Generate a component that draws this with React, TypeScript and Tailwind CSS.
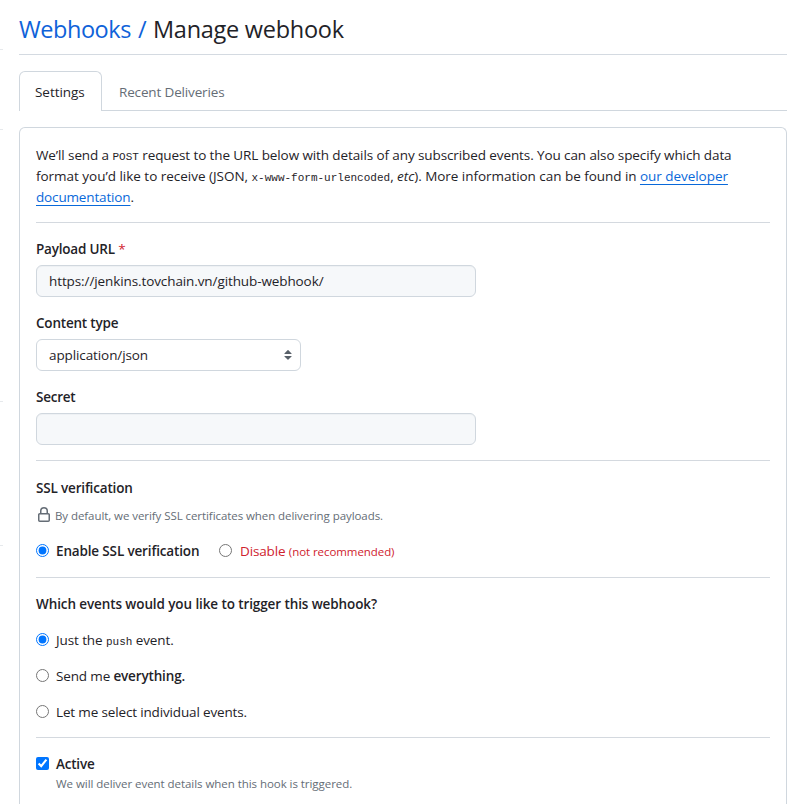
import type { ReactNode } from "react";

function Divider({ className = "" }: { className?: string }) {
  return <div className={`h-px shrink-0 bg-[#d4d9df] ${className}`} />;
}

function Code({ children }: { children: ReactNode }) {
  return <code className="font-['Liberation_Mono',monospace] text-[11px] leading-none tracking-normal">{children}</code>;
}

function Radio({ name, checked }: { name: string; checked?: boolean }) {
  return <input type="radio" name={name} defaultChecked={checked} className="m-0 block size-[13px] shrink-0" />;
}

function LockIcon() {
  return (
    <svg width="16" height="16" viewBox="0 0 16 16" fill="#656d76" className="mt-[2px] shrink-0">
      <path d="M4 4a4 4 0 0 1 8 0v2h.25c.966 0 1.75.784 1.75 1.75v5.5A1.75 1.75 0 0 1 12.25 15h-8.5A1.75 1.75 0 0 1 2 13.25v-5.5C2 6.784 2.784 6 3.75 6H4Zm8.25 3.5h-8.5a.25.25 0 0 0-.25.25v5.5c0 .138.112.25.25.25h8.5a.25.25 0 0 0 .25-.25v-5.5a.25.25 0 0 0-.25-.25ZM10.5 6V4a2.5 2.5 0 1 0-5 0v2Z" />
    </svg>
  );
}

export default function App() {
  return (
    <div className="flex h-[804px] w-[799px] overflow-hidden bg-white font-['Open_Sans',sans-serif] text-[13.5px] leading-[21px] whitespace-nowrap text-[#1f2328]">
      <div className="flex w-[3px] shrink-0 flex-col">
        <div className="mt-[49px] h-px bg-[#e6e9ec]" />
        <div className="mt-[79px] h-px bg-[#e6e9ec]" />
        <div className="mt-[271px] h-px bg-[#e6e9ec]" />
        <div className="mt-[143px] h-px bg-[#e6e9ec]" />
      </div>
      <main className="ml-4 flex w-[768px] shrink-0 flex-col">
        <h1 className="flex h-[55px] shrink-0 border-b border-[#d4dae1] pt-[11px] text-[23.5px] leading-[36px]">
          <a className="w-[134px] tracking-[-0.45px] text-[#0f62d9]">Webhooks<span className="ml-[7px]">/</span></a>
          <span className="tracking-[-0.27px]">Manage webhook</span>
        </h1>

        <nav className="mt-4 flex h-10 shrink-0">
          <div className="flex w-[83px] rounded-t-md border border-b-0 border-[#d0d7de] px-[15px] pt-[10px]">
            <span className="tracking-[-0.05px]">Settings</span>
          </div>
          <div className="flex flex-1 border-b border-[#d0d7de] pt-[11px] pl-[17px] text-[#656d76]">
            <span className="tracking-[-0.15px]">Recent Deliveries</span>
          </div>
        </nav>

        <section className="mt-4 flex flex-1 flex-col rounded-t-md border border-b-0 border-[#d0d7de] px-4 pt-[17px]">
          <p className="flex h-[63px] shrink-0 flex-col">
            <span className="h-[21px] tracking-[-0.1px]">
              We’ll send a <Code>POST</Code> request to the URL below with details of any subscribed events. You can also specify which data
            </span>
            <span className="h-[21px] tracking-[-0.04px]">
              <span className="tracking-[-0.02px]">format you’d like to receive (JSON, </span><Code>x-www-form-urlencoded</Code>, <em>etc</em>). More information can be found in{" "}
              <a className="text-[#0969da] underline decoration-1 underline-offset-[3px]">our developer</a>
            </span>
            <span className="h-[21px] tracking-[-0.15px]">
              <a className="text-[#0969da] underline decoration-1 underline-offset-[3px]">documentation</a>.
            </span>
          </p>
          <Divider className="mt-[14px]" />

          <label className="mt-4 h-[21px] shrink-0 font-semibold tracking-[-0.2px]">
            Payload URL <span className="font-normal text-[#d1242f]">*</span>
          </label>
          <div className="mt-[5px] flex h-8 w-[440px] shrink-0 items-center rounded-md border border-[#d0d7de] bg-[#f6f8fa] px-3 inset-shadow-[0_1px_0_rgba(208,215,222,0.2)]">
            <span className="tracking-[-0.1px]">https://jenkins.tovchain.vn/github-webhook/</span>
          </div>

          <label className="mt-4 h-[21px] shrink-0 font-semibold tracking-[-0.2px]">Content type</label>
          <div className="mt-[5px] flex h-8 w-[265px] shrink-0 items-center justify-between rounded-md border border-[#d0d7de] pr-1 pl-3">
            <span className="tracking-[-0.1px]">application/json</span>
            <svg width="16" height="16" viewBox="0 0 16 16" fill="#586069">
              <path d="M4.427 9.427l3.396 3.396a.251.251 0 0 0 .354 0l3.396-3.396A.25.25 0 0 0 11.396 9H4.604a.25.25 0 0 0-.177.427zM4.423 6.47L7.82 3.072a.25.25 0 0 1 .354 0L11.57 6.47a.25.25 0 0 1-.177.427H4.6a.25.25 0 0 1-.177-.427z" />
            </svg>
          </div>

          <label className="mt-4 h-[21px] shrink-0 font-semibold tracking-[-0.25px]">Secret</label>
          <div className="mt-[5px] h-8 w-[440px] shrink-0 rounded-md border border-[#d0d7de] bg-[#f6f8fa] inset-shadow-[0_1px_0_rgba(208,215,222,0.2)]" />
          <Divider className="mt-[15px]" />

          <h2 className="mt-[17px] h-[21px] shrink-0 font-semibold tracking-[-0.17px]">SSL verification</h2>
          <div className="mt-[6px] flex h-[21px] shrink-0 text-[11.5px] text-[#656d76]">
            <LockIcon />
            <span className="ml-[3px] tracking-[-0.07px]">By default, we verify SSL certificates when delivering payloads.</span>
          </div>
          <div className="mt-[15px] flex h-[21px] shrink-0">
            <div className="flex w-[183px] gap-[7px]">
              <div className="pt-[3px]"><Radio name="ssl" checked /></div>
              <span className="font-semibold tracking-[-0.15px]">Enable SSL verification</span>
            </div>
            <div className="pt-[3px]"><Radio name="ssl" /></div>
            <div className="ml-2 text-[#cf222e]">
              <span className="tracking-[-0.15px]">Disable</span>{" "}
              <span className="text-[11.5px] tracking-[-0.07px]">(not recommended)</span>
            </div>
          </div>
          <Divider className="mt-[15px]" />

          <h2 className="mt-4 h-[21px] shrink-0 font-semibold tracking-[-0.1px]">Which events would you like to trigger this webhook?</h2>
          <div className="mt-[15px] flex h-[21px] shrink-0 gap-[7px]">
            <div className="pt-[3px]"><Radio name="events" checked /></div>
            <span className="tracking-[-0.1px]">Just the <Code>push</Code> event.</span>
          </div>
          <div className="mt-[15px] flex h-[21px] shrink-0 gap-[7px]">
            <div className="pt-[3px]"><Radio name="events" /></div>
            <span className="tracking-[-0.15px]">Send me <b className="font-semibold">everything.</b></span>
          </div>
          <div className="mt-[15px] flex h-[21px] shrink-0 gap-[7px]">
            <div className="pt-[3px]"><Radio name="events" /></div>
            <span className="tracking-[-0.15px]">Let me select individual events.</span>
          </div>
          <Divider className="mt-[14px]" />

          <div className="mt-4 flex h-[21px] shrink-0 gap-[7px]">
            <div className="pt-[3px]"><input type="checkbox" defaultChecked className="m-0 block size-[13px]" /></div>
            <span className="font-semibold tracking-[-0.2px]">Active</span>
          </div>
          <p className="ml-5 h-[18px] shrink-0 text-[11.5px] leading-[18px] tracking-[-0.05px] text-[#656d76]">We will deliver event details when this hook is triggered.</p>
        </section>
      </main>
    </div>
  );
}
